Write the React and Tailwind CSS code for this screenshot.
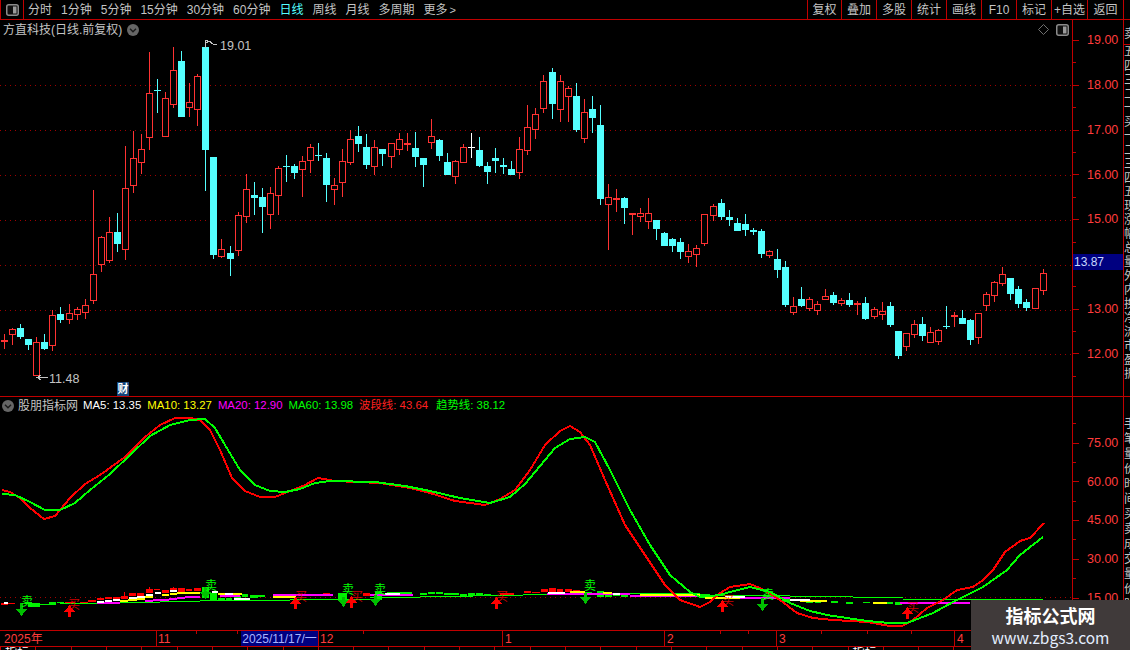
const C = [
['r',334,340,341,349],['r',328,329,334,345],['c',324,328,337,339],['c',339,339,345,350],['r',337,342,375,375],
['c',334,342,349,350],['r',310,315,345,351],['c',307,314,320,323],['r',304,313,319,324],['r',307,309,314,320],
['r',299,305,312,319],['r',190,274,300,304],['r',236,237,264,272],['r',217,232,260,263],['c',213,232,244,252],
['r',146,188,249,260],['r',131,158,185,193],['r',134,149,162,174],['r',52,93,137,150],['c',79,90,91,113],
['r',92,98,136,136],['r',47,70,104,108],['c',51,61,117,117],['r',83,102,107,117],['r',74,76,109,126],
['c',47,47,150,191],['c',157,157,255,259],['r',239,249,256,258],['c',246,253,259,276],['r',212,215,250,256],
['r',174,189,216,223],['c',182,195,198,215],['c',188,197,207,233],['r',187,193,214,229],['r',166,168,195,215],
['c',155,166,167,182],['c',164,166,173,179],['r',156,161,169,197],['r',144,147,160,173],['c',143,155,156,161],
['c',153,158,185,202],['r',178,185,189,205],['r',149,161,182,197],['r',130,139,162,165],['c',126,136,144,152],
['c',134,147,165,169],['r',140,147,166,175],['c',149,149,154,166],['r',143,143,156,168],['r',133,139,149,155],
['r',133,143,144,151],['c',132,148,157,167],['c',158,158,165,187],['r',119,136,142,149],['c',139,140,156,161],
['c',153,162,175,175],['r',160,161,176,184],['r',144,147,162,163],['w',133,147,148,158],['c',137,150,166,167],
['c',162,166,172,184],['c',148,158,161,173],['c',158,165,167,174],['c',161,169,175,175],['r',137,149,172,179],
['r',105,127,150,155],['r',108,114,129,139],['r',75,81,108,113],['c',68,72,104,119],['r',75,81,109,122],
['r',86,88,96,122],['c',83,96,130,132],['r',99,112,138,143],['c',96,109,118,133],['c',105,125,199,205],
['r',184,197,204,250],['r',189,198,200,212],['c',197,198,208,224],['r',213,213,215,235],['r',208,213,216,222],
['r',198,213,221,229],['c',220,220,229,240],['c',232,233,246,246],['c',238,239,246,252],['c',238,242,252,259],
['r',244,251,256,263],['r',245,248,254,267],['r',214,214,243,246],['r',204,206,215,221],['c',199,203,217,220],
['c',210,217,220,226],['c',218,223,231,231],['c',214,224,230,236],['c',228,230,232,235],['c',229,231,254,258],
['r',250,251,255,258],['c',249,259,270,278],['c',261,267,305,307],['r',297,306,312,315],['c',287,299,306,307],
['r',297,299,308,311],['r',301,304,310,315],['r',289,296,299,300],['c',292,295,303,305],['r',298,300,303,306],
['c',293,300,305,307],['r',301,303,305,315],['c',297,303,319,320],['r',307,309,316,319],['r',302,311,314,320],
['c',302,306,325,327],['c',331,331,356,359],['r',333,333,346,351],['r',320,324,334,338],['c',317,324,336,341],
['r',327,332,342,343],['r',329,330,341,345],['c',306,326,327,329],['r',312,315,317,327],['c',310,318,324,324],
['c',319,320,340,345],['r',313,313,337,344],['r',292,294,305,311],['r',281,282,295,302],['r',267,274,283,286],
['c',278,278,294,300],['c',286,289,304,308],['c',299,302,308,311],['r',288,288,308,308],['r',269,273,290,295],
];
const RED = '#ff3232', CY = '#54ffff';

function Candle({ d, i }) {
  const x = Math.floor(4.6 + 8.05 * i);
  const [t, hi, top, bot, lo] = d;
  const col = t === 'r' ? RED : t === 'w' ? '#ffffff' : CY;
  const h = bot - top;
  return (
    <g>
      <rect x={x} y={hi} width={1} height={lo - hi} fill={col} />
      {t === 'r' && h > 2 ? (
        <rect x={x - 3 + 0.5} y={top + 0.5} width={6} height={h} fill="#000" stroke={col} strokeWidth={1} />
      ) : (
        <rect x={x - 3} y={top} width={7} height={Math.max(h, t === 'r' ? 2 : 1)} fill={col} />
      )}
    </g>
  );
}

const PanelIcon = () => (
  <svg width="13" height="12" viewBox="0 0 13 12" className="block shrink-0">
    <rect x="0.75" y="0.75" width="11.5" height="10.5" rx="2" fill="#111" stroke="#8c8c8c" strokeWidth="1.5" />
    <rect x="7" y="2.5" width="3.5" height="7" fill="#9a9a9a" />
  </svg>
);
const Chevron = () => (
  <svg width="12" height="12" viewBox="0 0 12 12" className="block shrink-0">
    <circle cx="6" cy="6" r="6" fill="#666" />
    <path d="M3 4.8 L6 7.8 L9 4.8" fill="none" stroke="#1a1a1a" strokeWidth="1.4" />
  </svg>
);

const NAV = ['分时','1分钟','5分钟','15分钟','30分钟','60分钟','日线','周线','月线','多周期','更多'];
const BTN = [
  ['复权','w-[34px]'],['叠加','w-[35px]'],['多股','w-[35px]'],['统计','w-[35px]'],['画线','w-[35px]'],
  ['F10','w-[35px]'],['标记','w-[35px]'],['+自选','w-[36px]'],['返回','w-[36px]'],
];

const RED_LINE = [[2,490],[10,492],[20,498],[30,508],[44,519],[55,516],[70,498],[85,484],[100,475],[125,457],[145,437],[160,425],[175,418],[190,418],[200,420],[210,430],[220,450],[232,478],[245,491],[260,497],[275,497],[290,491],[305,485],[318,478],[335,481],[380,483],[410,488],[430,493],[455,501],[485,505],[500,499],[515,490],[530,470],[545,445],[560,431],[570,426],[580,432],[590,445],[605,480],[625,525],[645,555],[665,585],[680,600],[700,607],[710,602],[720,593],[730,587],[750,584],[760,588],[780,600],[797,613],[813,618],[833,620],[867,622],[890,626],[902,626],[913,620],[927,608],[943,600],[957,590],[973,587],[983,580],[993,570],[1005,552],[1020,541],[1030,538],[1044,523]];
const GREEN_LINE = [[2,494],[15,495],[30,502],[45,510],[60,510],[75,503],[90,490],[110,474],[130,455],[150,436],[170,425],[190,420],[205,419],[215,428],[228,450],[240,470],[255,485],[270,491],[285,492],[300,489],[315,483],[330,481],[375,482],[405,486],[430,491],[460,498],[490,503],[510,497],[525,484],[540,466],[555,448],[570,439],[585,437],[595,442],[610,470],[630,510],[650,545],[670,575],[690,592],[700,597],[720,595],[730,592],[750,587],[770,592],[790,603],[810,611],[827,615],[867,621],[890,623],[907,623],[933,613],[953,602],[967,595],[983,587],[1007,570],[1020,555],[1043,537]];
const toPts = (a) => a.map((p) => p.join(',')).join(' ');

const LIME_STEPS = [[60,120,603],[120,160,602],[160,200,601],[200,290,600],[290,370,599],[370,420,597],[420,473,596],[473,523,595],[523,580,594],[580,700,593],[700,790,595],[790,853,596],[853,903,597],[903,1043,599]];
const RED_B = [[1,8,603,605],[8,15,603,604],[65,75,602,603],[80,88,602,603],[88,96,600,602],[97,104,598,600],[105,112,597,599],[113,120,597,599],[121,128,596,599],[124,125,592,596],[129,136,593,596],[137,144,593,596],[146,153,589,593],[149,150,587,590],[154,160,589,590],[162,169,590,593],[170,177,588,591],[173,174,587,589],[178,185,588,592],[186,192,589,591],[194,201,588,591],[323,330,593,596],[363,370,593,596],[500,514,593,595],[524,531,591,593],[532,540,592,593],[541,548,589,592],[549,556,588,592],[557,563,589,592],[565,572,589,592],[573,580,590,593]];
const GREEN_B = [[28,40,603,607],[25,32,602,604],[40,50,604,605],[49,56,602,605],[57,64,602,603],[202,209,587,598],[210,217,593,601],[218,225,598,600],[226,232,598,600],[234,241,596,599],[242,248,594,597],[250,258,595,598],[258,265,595,597],[338,347,593,600],[375,382,592,600],[387,395,592,595],[395,403,592,595],[403,412,592,595],[420,427,593,595],[428,435,592,594],[436,443,592,594],[444,452,593,595],[452,459,593,595],[460,467,594,596],[468,475,593,596],[476,483,593,596],[484,491,594,596],[577,592,592,595],[597,604,591,597],[605,612,595,597],[613,620,594,596],[621,628,595,597],[700,710,594,598],[782,790,598,602],[806,813,601,603],[815,821,601,603],[831,838,601,603],[846,853,602,604],[863,870,602,603],[886,893,602,604],[895,902,602,605]];
const WHITE_S = [[4,8,602],[97,104,601],[105,112,600],[113,120,599],[129,137,597],[137,145,596],[146,153,594],[155,161,592],[170,177,590],[212,218,591],[225,233,593],[234,250,598],[385,400,593],[548,565,592],[613,620,593],[725,745,596],[790,810,599]];
const YELLOW_S = [[120,128,600],[128,137,599],[137,145,598],[145,153,596],[162,169,594],[170,177,593],[177,200,592],[218,242,593],[273,296,596],[570,585,591],[603,612,592],[640,700,594],[705,740,597],[800,827,600],[873,887,602]];
const MAG_S = [[97,120,602],[145,153,600],[153,169,599],[169,177,598],[177,185,597],[185,200,596],[220,240,595],[273,333,594],[370,413,594],[547,630,593],[630,700,595],[720,790,597],[900,970,602]];

const SELL = [[21,603,616,21,606],[205,587,599,205,590],[343,597,607,342,594],[375,595,606,374,594],[585,593,604,584,590],[762,598,611,762,599]];
const BUY = [[69,605,617,68,609],[295,597,609,295,601],[351,596,608,351,601],[496,597,609,496,601],[722,600,612,722,605],[907,607,619,907,612]];

const TICKS = [196,237,363,720,748,821,867,911];
const STRIP_A = ['卖','五','四','三','二','一','买','一','二','三','四','五','现','涨','幅','总','量','外','内','换','净','流','市','盈','振'];
const STRIP_B = ['手','笔','量','价','时','间','买','卖','成','交','量','价','时','间'];
const BOTTOM = Array.from({ length: 32 }, (_, i) => i);

function Axis({ vals }) {
  return (
    <>
      {vals.map((v) => (
        <div key={v}>
          <div className="flex h-[22.4px] items-center">
            <div className="h-px w-[6px] bg-[#c00000]" />
            {v !== '14.00' && <span className="ml-[8px] text-[12.5px] leading-none text-[#ff3c3c]">{v}</span>}
          </div>
          <div className="flex h-[22.4px] items-center">
            <div className="h-px w-[3px] bg-[#c00000]" />
          </div>
        </div>
      ))}
    </>
  );
}

export default function App() {
  return (
    <div className="relative flex h-[650px] w-[1130px] flex-col overflow-hidden bg-black font-['Liberation_Sans','Noto_Sans_CJK_SC',sans-serif] text-[12px] text-[#c4c4c4]">
      {/* toolbar */}
      <div className="flex h-[20px] shrink-0 items-stretch justify-between border-b border-[#c00000]">
        <div className="flex items-center">
          <div className="flex h-full w-[24px] items-center justify-center border-x border-[#c00000]">
            <PanelIcon />
          </div>
          <div className="ml-[4px] flex items-center gap-[9px]">
            {NAV.map((n) => (
              <span key={n} className={n === '日线' ? 'leading-none text-[#54ffff]' : 'leading-none'}>
                {n}
                {n === '更多' && <span className="ml-[2px] text-[11px]">&gt;</span>}
              </span>
            ))}
          </div>
        </div>
        <div className="mr-[6px] flex border-r border-[#c00000]">
          {BTN.map(([t, w]) => (
            <div key={t} className={`flex items-center justify-center border-l border-[#c00000] leading-none ${w}`}>
              {t}
            </div>
          ))}
        </div>
      </div>

      {/* price chart */}
      <div className="flex h-[376px] shrink-0">
        <div className="relative w-[1072px] shrink-0">
          <svg viewBox="0 20 1072 376" width="1072" height="376" className="absolute inset-0 block" shapeRendering="crispEdges">
            {[85.5, 130.5, 175.5, 220.5, 265.5, 310.5, 354.5].map((y) => (
              <line key={y} x1="0" x2="1072" y1={y} y2={y} stroke="#a00000" strokeWidth="1" strokeDasharray="1 4" />
            ))}
            {C.map((d, i) => (
              <Candle key={i} d={d} i={i} />
            ))}
            <path d="M205.5 48 V40 H208 M206 43 L209 41 L213 44 L217 44" fill="none" stroke="#c4c4c4" />
            <text x="220" y="49.5" fill="#c4c4c4" fontSize="12.5">19.01</text>
            <path d="M36 377.5 H48 M37 377.5 L41 375 M37 377.5 L41 380" fill="none" stroke="#c4c4c4" />
            <text x="49" y="383" fill="#c4c4c4" fontSize="12.5">11.48</text>
          </svg>
          <div className="relative flex h-[19px] items-center justify-between pl-[3px] pr-[3px]">
            <div className="flex items-center gap-[5px]">
              <span className="leading-none">方直科技(日线.前复权)</span>
              <Chevron />
            </div>
            <div className="flex items-center gap-[7px]">
              <svg width="11" height="11" viewBox="0 0 11 11" className="block">
                <path d="M5.5 0.5 L10.5 5.5 L5.5 10.5 L0.5 5.5 Z" fill="none" stroke="#707070" />
              </svg>
              <PanelIcon />
            </div>
          </div>
          <div className="absolute left-[117px] top-[362px] flex h-[14px] w-[12px] items-center justify-center bg-[#15457a] text-[11px] font-bold leading-none text-white">
            财
          </div>
        </div>
        <div className="relative w-[51px] shrink-0 border-l border-[#c00000] pt-[9.3px]">
          <Axis vals={['19.00','18.00','17.00','16.00','15.00','14.00','13.00','12.00']} />
          <div className="absolute left-0 right-0 top-[234px] flex h-[16px] items-center bg-[#000080] pl-[1px] leading-none text-[#c8d8ff]">
            13.87
          </div>
        </div>
        <div className="w-[7px] shrink-0 overflow-hidden border-l border-[#c00000] pt-[5px]">
          {STRIP_A.map((s, i) => (
            <div key={i} className={i === 0 ? 'h-[20px] whitespace-nowrap border-b border-[#c00000] leading-[19px]' : 'h-[14px] whitespace-nowrap leading-[14px]'}>
              {s}
            </div>
          ))}
        </div>
      </div>

      {/* indicator */}
      <div className="flex h-[234px] shrink-0 border-t border-[#c00000]">
        <div className="relative w-[1072px] shrink-0">
          <svg viewBox="0 397 1072 233" width="1072" height="233" className="absolute inset-0 block" shapeRendering="crispEdges">
            <line x1="0" x2="1072" y1="597.5" y2="597.5" stroke="#a00000" strokeDasharray="1 4" />
            {LIME_STEPS.map(([a, b, y], i) => (
              <rect key={i} x={a} y={y} width={b - a} height="1" fill="#00ff00" />
            ))}
            {GREEN_B.map(([a, b, c, d], i) => (
              <rect key={i} x={a} y={c} width={b - a} height={d - c} fill="#00f000" />
            ))}
            {RED_B.map(([a, b, c, d], i) => (
              <rect key={i} x={a} y={c} width={b - a} height={d - c} fill="#ff0000" />
            ))}
            {MAG_S.map(([a, b, y], i) => (
              <rect key={i} x={a} y={y} width={b - a} height="2" fill="#ff00ff" />
            ))}
            {YELLOW_S.map(([a, b, y], i) => (
              <rect key={i} x={a} y={y} width={b - a} height="2" fill="#ffff00" />
            ))}
            {WHITE_S.map(([a, b, y], i) => (
              <rect key={i} x={a} y={y} width={b - a} height="2" fill="#ffffff" />
            ))}
            <polyline points={toPts(RED_LINE)} fill="none" stroke="#ff0000" strokeWidth="2" />
            <polyline points={toPts(GREEN_LINE)} fill="none" stroke="#00ff00" strokeWidth="2" />
            {SELL.map(([x, t, b, tx, ty], i) => (
              <g key={i}>
                <rect x={x - 1} y={t} width="3" height={b - t - 6} fill="#00c000" />
                <polygon points={`${x - 5},${b - 7} ${x + 6},${b - 7} ${x + 0.5},${b}`} fill="#00c000" />
                <text x={tx} y={ty} fill="#00ff00" fontSize="12">卖</text>
              </g>
            ))}
            {BUY.map(([x, t, b, tx, ty], i) => (
              <g key={i}>
                <polygon points={`${x + 0.5},${t} ${x + 6},${t + 7} ${x - 5},${t + 7}`} fill="#ff0000" />
                <rect x={x - 1} y={t + 6} width="3" height={b - t - 6} fill="#ff0000" />
                <text x={tx} y={ty} fill="#ff0000" fontSize="12" opacity="0.8">买</text>
              </g>
            ))}
          </svg>
          <div className="relative flex h-[17px] items-center gap-[6px] pl-[2px] text-[11.4px] leading-none">
            <div className="-mr-[2px]">
              <Chevron />
            </div>
            <span className="-mr-[1px] text-[12px] text-[#c4c4c4]">股朋指标网</span>
            <span className="text-white">MA5: 13.35</span>
            <span className="text-[#ffff00]">MA10: 13.27</span>
            <span className="text-[#ff00ff]">MA20: 12.90</span>
            <span className="text-[#00ff00]">MA60: 13.98</span>
            <span className="text-[#ff2020]">波段线: 43.64</span>
            <span className="ml-[2px] text-[#00ff00]">趋势线: 38.12</span>
          </div>
        </div>
        <div className="w-[51px] shrink-0 border-l border-[#c00000] pt-[17px]">
          {['75.00','60.00','45.00','30.00','15.00'].map((v) => (
            <div key={v}>
              <div className="flex h-[19.375px] items-center">
                <div className="h-px w-[3px] bg-[#c00000]" />
              </div>
              <div className="flex h-[19.375px] items-center">
                <div className="h-px w-[6px] bg-[#c00000]" />
                <span className="ml-[8px] text-[12.5px] leading-none text-[#ff3c3c]">{v}</span>
              </div>
            </div>
          ))}
        </div>
        <div className="w-[7px] shrink-0 overflow-hidden border-l border-[#c00000] pt-[20px]">
          {STRIP_B.map((s, i) => (
            <div key={i} className="h-[15px] whitespace-nowrap leading-[15px]">{s}</div>
          ))}
        </div>
      </div>

      {/* date bar */}
      <div className="relative flex h-[16px] shrink-0 items-stretch border-t border-[#c00000] text-[12px] leading-none text-[#ff3c3c]">
        <div className="flex w-[156px] items-center pl-[4px]">2025年</div>
        <div className="flex w-[85px] items-center border-l border-[#c00000] pl-[1px]">11</div>
        <div className="flex w-[77px] items-center justify-center bg-[#000080] text-[#a8b4ff]">2025/11/17/一</div>
        <div className="flex w-[184px] items-center border-l border-[#c00000] pl-[1px]">12</div>
        <div className="flex w-[162px] items-center border-l border-[#c00000] pl-[2px]">1</div>
        <div className="flex w-[112px] items-center border-l border-[#c00000] pl-[2px]">2</div>
        <div className="flex w-[178px] items-center border-l border-[#c00000] pl-[2px]">3</div>
        <div className="flex flex-1 items-center border-l border-[#c00000] pl-[2px]">4</div>
        <svg viewBox="0 0 1130 3" width="1130" height="3" className="absolute left-0 top-0 block">
          {TICKS.map((x) => (
            <rect key={x} x={x} y="0" width="1" height="3" fill="#c00000" />
          ))}
        </svg>
      </div>

      {/* clipped status row */}
      <div className="grid h-[4px] shrink-0 grid-cols-[repeat(32,minmax(0,1fr))] overflow-hidden border-t border-[#c00000] leading-[12px] text-white">
        {BOTTOM.map((i) => (
          <div key={i} className="whitespace-nowrap border-l border-[#c00000] pl-[4px]">
            {i === 0 || i === 24 ? '指标' : ''}
          </div>
        ))}
      </div>

      {/* watermark */}
      <div className="absolute bottom-0 right-0 flex h-[50px] w-[159px] flex-col items-center bg-[#403a3a] pt-[3px] font-['Noto_Sans_CJK_SC','Noto_Sans',sans-serif]">
        <div className="text-[18px] font-bold leading-[25px] text-white">指标公式网</div>
        <div className="text-[15.5px] leading-[19px] text-[#e4eeff]">www.zbgs3.com</div>
      </div>
    </div>
  );
}
